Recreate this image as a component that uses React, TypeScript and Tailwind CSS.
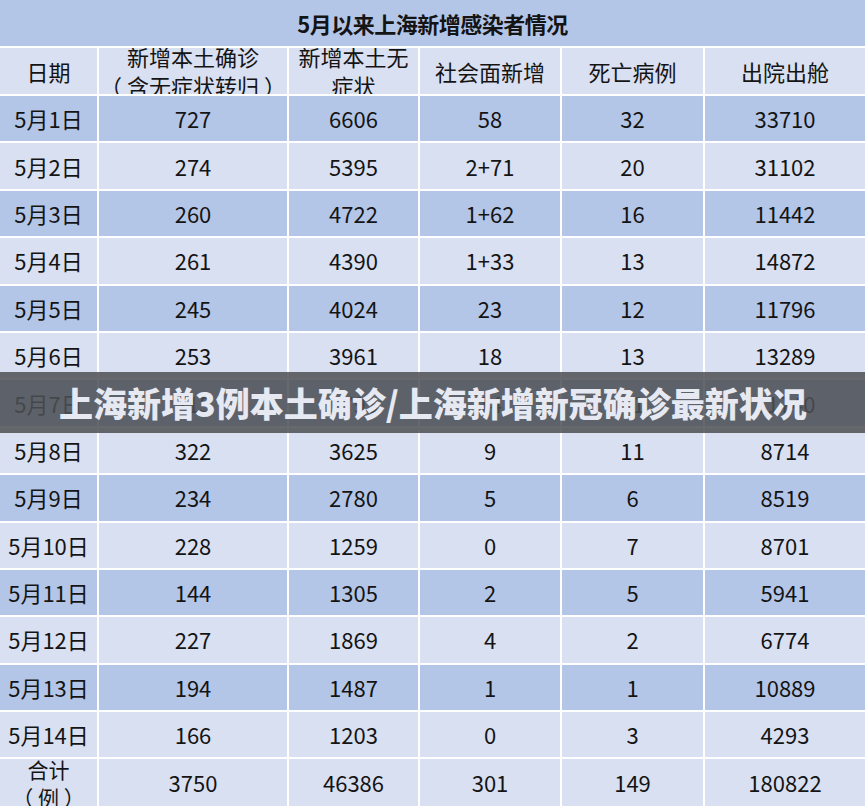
import React from "react";

const rows: string[][] = [
  ["5月1日", "727", "6606", "58", "32", "33710"],
  ["5月2日", "274", "5395", "2+71", "20", "31102"],
  ["5月3日", "260", "4722", "1+62", "16", "11442"],
  ["5月4日", "261", "4390", "1+33", "13", "14872"],
  ["5月5日", "245", "4024", "23", "12", "11796"],
  ["5月6日", "253", "3961", "18", "13", "13289"],
  ["5月7日", "215", "3793", "14", "11", "11740"],
  ["5月8日", "322", "3625", "9", "11", "8714"],
  ["5月9日", "234", "2780", "5", "6", "8519"],
  ["5月10日", "228", "1259", "0", "7", "8701"],
  ["5月11日", "144", "1305", "2", "5", "5941"],
  ["5月12日", "227", "1869", "4", "2", "6774"],
  ["5月13日", "194", "1487", "1", "1", "10889"],
  ["5月14日", "166", "1203", "0", "3", "4293"],
];

const font = { fontFamily: '"Noto Sans CJK SC", "Noto Sans", sans-serif' };

export default function App() {
  return (
    <div className="relative w-[865px] h-[807px] overflow-hidden bg-white text-[#141414]" style={font}>
      <div className="grid grid-cols-[97px_188px_129px_140px_141px_160px] gap-[2px] bg-white">
        <div className="col-span-6 h-[46px] bg-[#b4c6e7] flex items-center justify-center text-[22px] font-bold tracking-[-0.5px]">
          5月以来上海新增感染者情况
        </div>
        {[
          ["日期"],
          ["新增本土确诊", "（ 含无症状转归 ）"],
          ["新增本土无", "症状"],
          ["社会面新增"],
          ["死亡病例"],
          ["出院出舱"],
        ].map((h, i) => (
          <div key={i} className="h-[46px] bg-[#d9e0f2] flex flex-col items-center justify-center overflow-hidden text-[22px] leading-[29px]">
            {h.map((l, j) => (
              <div key={j} className="whitespace-nowrap">{l}</div>
            ))}
          </div>
        ))}
        {rows.map((r, ri) => (
          <React.Fragment key={ri}>
            {r.map((c, ci) => (
              <div
                key={ci}
                className={`h-[45.4px] flex items-center justify-center text-[22px] ${ri % 2 === 0 ? "bg-[#b4c6e7]" : "bg-[#d9e0f2]"}`}
              >
                {c}
              </div>
            ))}
          </React.Fragment>
        ))}
        <div className="h-[47px] bg-[#d9e0f2] flex flex-col items-center justify-center overflow-hidden text-[21px] leading-[28px]">
          <div>合计</div>
          <div className="whitespace-nowrap">（ 例 ）</div>
        </div>
        {["3750", "46386", "301", "149", "180822"].map((c, i) => (
          <div key={i} className="h-[47px] bg-[#d9e0f2] flex items-center justify-center text-[22px]">
            {c}
          </div>
        ))}
      </div>
      <div className="absolute left-0 top-[372px] w-full h-[61px] bg-[rgba(78,80,84,0.86)] flex items-center pl-[59px]">
        <span className="text-[34px] font-black text-[#e6e9f2] whitespace-nowrap leading-none">
          上海新增3例本土确诊/上海新增新冠确诊最新状况
        </span>
      </div>
    </div>
  );
}
